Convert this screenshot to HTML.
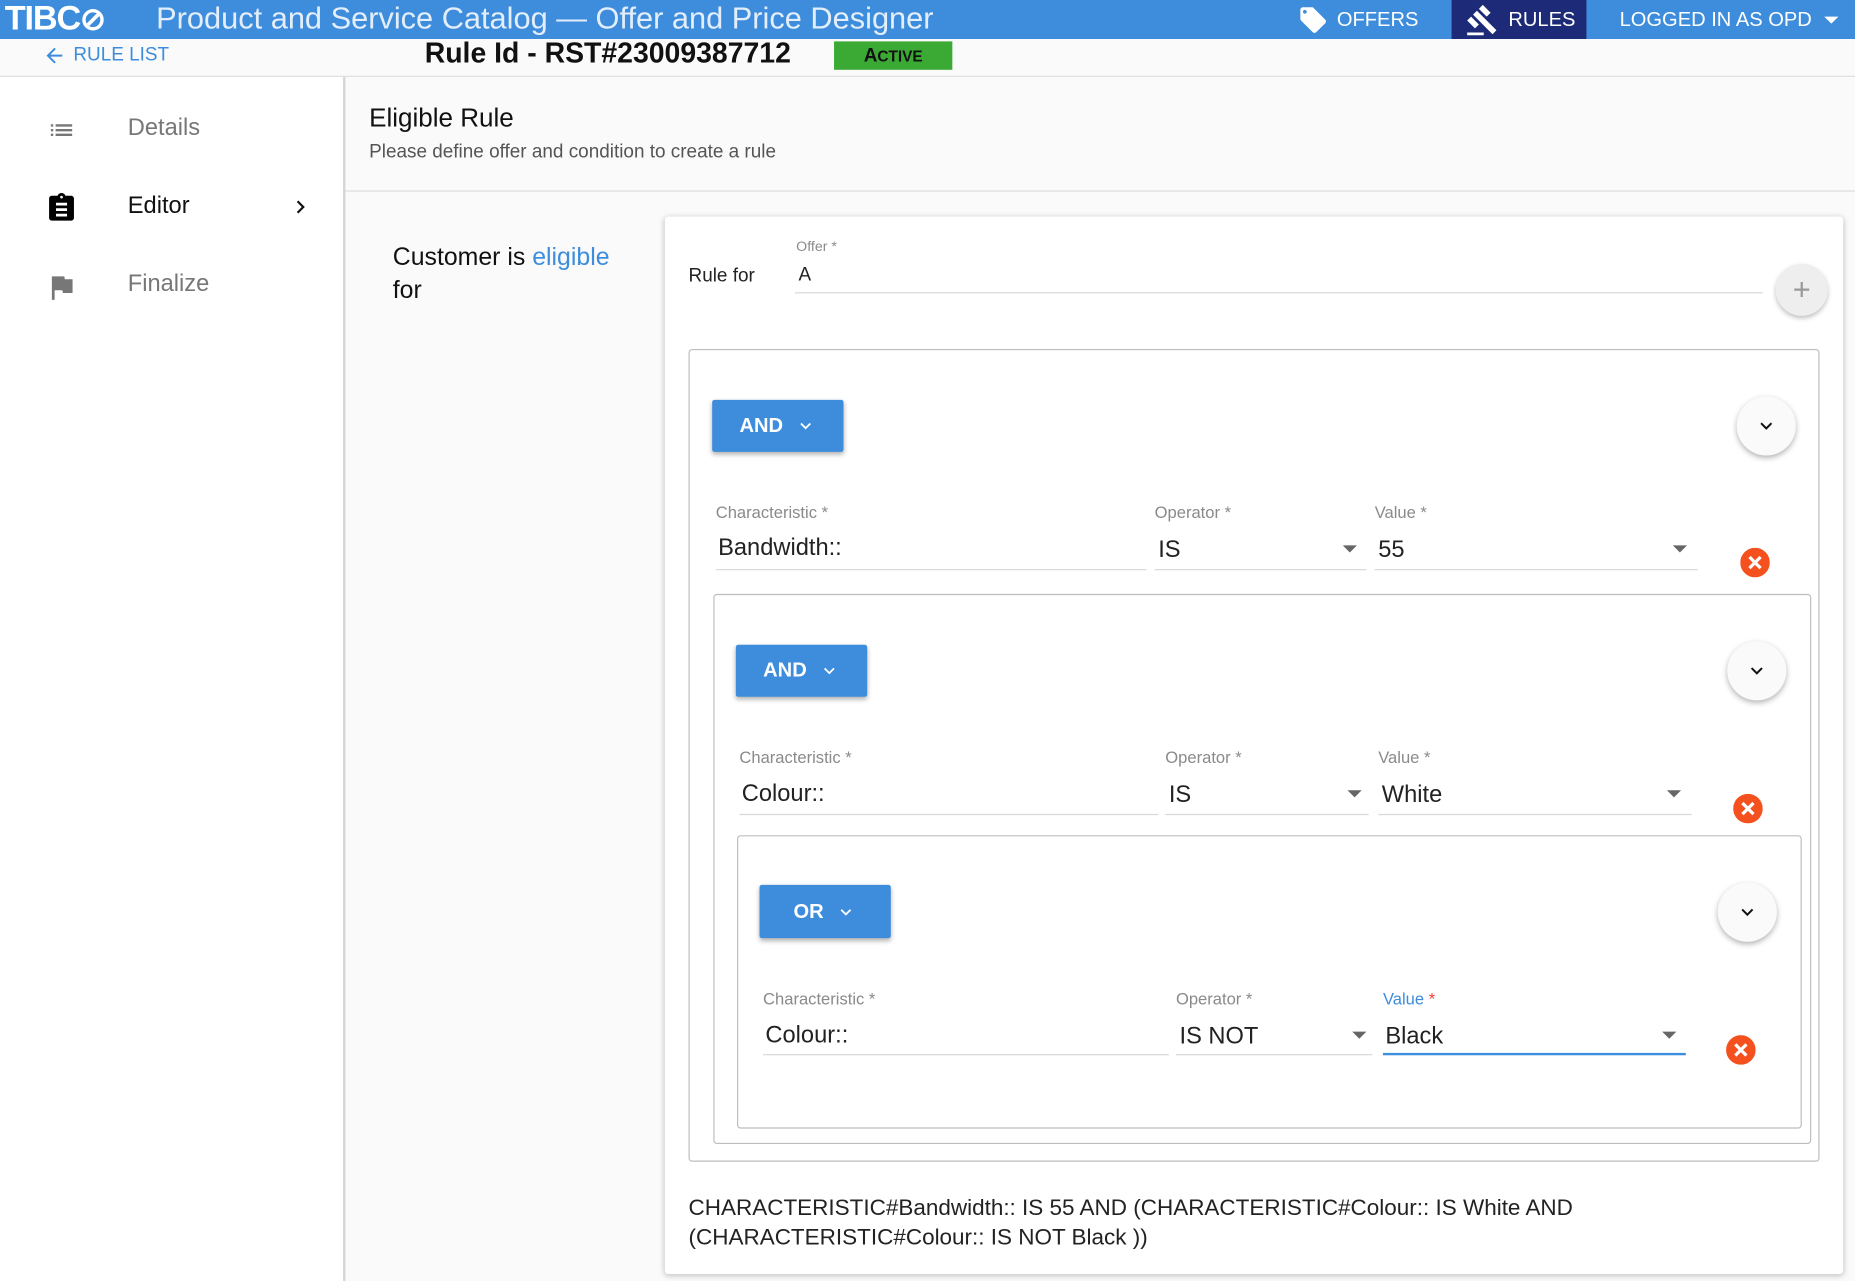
<!DOCTYPE html>
<html><head><meta charset="utf-8"><style>
html,body{margin:0;padding:0;width:1855px;height:1281px;overflow:hidden;background:#fafafa}
#r{position:absolute;left:0;top:0;width:1568px;height:1083px;transform:scale(1.18304);transform-origin:0 0;font-family:"Liberation Sans",sans-serif;background:#fafafa}
.a{position:absolute;white-space:nowrap}
.hdr{left:0;top:0;width:1568px;height:33px;background:#3d8ddc}
.lbl{font-size:14px;color:#8a8a8a}
.val{font-size:20px;color:#222}
.ul{position:absolute;height:1px;background:#d8d8d8}
.btn{position:absolute;background:#3d8ddc;color:#fff;font-size:17px;font-weight:bold;border-radius:2px;box-shadow:0 2px 4px rgba(0,0,0,.3);display:flex;align-items:center;justify-content:center;gap:10px}
.chev{position:absolute;width:50px;height:50px;border-radius:50%;background:#fafafa;box-shadow:0 2px 5px rgba(0,0,0,.3)}
.chev svg{position:absolute;left:15px;top:15px}
.xc{position:absolute;width:25px;height:25px}
.car{position:absolute;width:0;height:0;border-left:6px solid transparent;border-right:6px solid transparent;border-top:6px solid #666}
.box{position:absolute;border:1.5px solid #bdbdbd;border-radius:3px}
</style></head><body><div id="r">
<div class="a hdr"></div>
<div class="a" style="left:4px;top:0;font-size:29px;color:#fff;font-weight:bold;letter-spacing:-1px">TIBC<span style="font-size:26px">⊘</span></div>
<div class="a" style="left:132px;top:0;font-size:26px;color:#e3eefa">Product and Service Catalog — Offer and Price Designer</div>
<svg class="a" style="left:1096px;top:4px" width="28" height="26" viewBox="0 0 24 24"><path fill="#fff" d="M21.4 11.6l-9-9C12 2.2 11.5 2 11 2H4c-1.1 0-2 .9-2 2v7c0 .55.22 1.05.59 1.42l9 9c.36.36.86.58 1.41.58s1.05-.22 1.41-.59l7-7c.37-.36.59-.86.59-1.41s-.23-1.06-.6-1.4zM5.5 7C4.67 7 4 6.33 4 5.5S4.67 4 5.5 4 7 4.67 7 5.5 6.33 7 5.5 7z"/></svg>
<div class="a" style="left:1130px;top:7px;font-size:17px;color:#fff">OFFERS</div>
<div class="a" style="left:1227px;top:0;width:114px;height:33px;background:#1c2a78"></div>
<svg class="a" style="left:1239px;top:3px" width="28" height="28" viewBox="0 0 24 24"><path fill="#fff" d="M1 21h12v2H1zM5.24 8.07l2.83-2.83 14.14 14.14-2.83 2.83zM12.32 1l5.66 5.66-2.83 2.83-5.66-5.66zM3.83 9.48l5.66 5.66-2.83 2.83L1 12.31z"/></svg>
<div class="a" style="left:1275px;top:7px;font-size:17px;color:#fff">RULES</div>
<div class="a" style="left:1369px;top:7px;font-size:17px;color:#fff">LOGGED IN AS OPD</div>
<div class="car" style="left:1542px;top:14px;border-top-color:#fff"></div>
<div class="a" style="left:0;top:33px;width:1568px;height:31px;background:#fafafa;border-bottom:1px solid #ddd"></div>
<svg class="a" style="left:35px;top:37px" width="22" height="20" viewBox="0 0 24 24"><path fill="#3d8ddc" d="M20 11H7.83l5.59-5.59L12 4l-8 8 8 8 1.41-1.41L7.83 13H20v-2z"/></svg>
<div class="a" style="left:62px;top:38px;font-size:16px;color:#3d8ddc">RULE LIST</div>
<div class="a" style="left:359px;top:32px;font-size:24px;font-weight:bold;color:#111">Rule Id - RST#23009387712</div>
<div class="a" style="left:705px;top:35px;width:100px;height:24px;background:#3aaa35;color:#111;font-size:16px;font-weight:bold;text-align:center;line-height:26px">A<span style="font-size:13px">CTIVE</span></div>
<div class="a" style="left:0;top:65px;width:290px;height:1018px;background:#fff;border-right:2px solid #d5d5d5"></div>
<svg class="a" style="left:38px;top:98px" width="28" height="24" viewBox="0 0 24 24"><path fill="#777" d="M3 13h2v-2H3v2zm0 4h2v-2H3v2zm0-8h2V7H3v2zm4 4h14v-2H7v2zm0 4h14v-2H7v2zM7 7v2h14V7H7z"/></svg>
<div class="a" style="left:108px;top:97px;font-size:20px;color:#777">Details</div>
<svg class="a" style="left:38px;top:162px" width="28" height="28" viewBox="0 0 24 24"><path fill="#000" d="M19 3h-4.18C14.4 1.84 13.3 1 12 1s-2.4.84-2.82 2H5c-1.1 0-2 .9-2 2v14c0 1.1.9 2 2 2h14c1.1 0 2-.9 2-2V5c0-1.1-.9-2-2-2zm-7 0c.55 0 1 .45 1 1s-.45 1-1 1-1-.45-1-1 .45-1 1-1zm4 15H8v-2h8v2zm0-4H8v-2h8v2zm0-4H8V8h8v2z"/></svg>
<div class="a" style="left:108px;top:163px;font-size:20px;color:#111">Editor</div>
<svg class="a" style="left:243px;top:164px" width="22" height="22" viewBox="0 0 24 24"><path fill="#111" d="M8.59 16.59L13.17 12 8.59 7.41 10 6l6 6-6 6z"/></svg>
<svg class="a" style="left:38px;top:229px" width="28" height="28" viewBox="0 0 24 24"><path fill="#777" d="M14.4 6L14 4H5v17h2v-7h5.6l.4 2h7V6z"/></svg>
<div class="a" style="left:108px;top:229px;font-size:20px;color:#777">Finalize</div>
<div class="a" style="left:312px;top:87px;font-size:22px;color:#111">Eligible Rule</div>
<div class="a" style="left:312px;top:120px;font-size:16px;color:#555">Please define offer and condition to create a rule</div>
<div class="a" style="left:292px;top:161px;width:1276px;height:1px;background:#ddd"></div>
<div class="a" style="left:332px;top:204px;font-size:21px;color:#111;line-height:28px">Customer is <span style="color:#3d8ddc">eligible</span><br>for</div>
<div class="a" style="left:562px;top:183px;width:996px;height:894px;background:#fff;box-shadow:0 1px 5px rgba(0,0,0,.25);border-radius:3px"></div>
<div class="a" style="left:582px;top:225px;font-size:16px;color:#222">Rule for</div>
<div class="a lbl" style="left:673px;top:201px;font-size:12px">Offer *</div>
<div class="a" style="left:675px;top:224px;font-size:16px;color:#222">A</div>
<div class="ul" style="left:672px;top:247px;width:818px"></div>
<div class="a" style="left:1501px;top:223px;width:44px;height:44px;border-radius:50%;background:#eee;box-shadow:0 2px 4px rgba(0,0,0,.25);color:#999;font-size:26px;text-align:center;line-height:42px">+</div>

<div class="box" style="left:582px;top:295px;width:954px;height:685px"></div>
<div class="btn" style="left:602px;top:338px;width:111px;height:44px">AND <svg width="18" height="18" viewBox="0 0 24 24"><path fill="#fff" d="M7.41 8.59L12 13.17l4.59-4.58L18 10l-6 6-6-6z"/></svg></div>
<div class="chev" style="left:1468px;top:335px"><svg width="20" height="20" viewBox="0 0 24 24"><path fill="#111" d="M7.41 8.59L12 13.17l4.59-4.58L18 10l-6 6-6-6z"/></svg></div>
<div class="a lbl" style="left:605px;top:425px">Characteristic *</div>
<div class="a lbl" style="left:976px;top:425px">Operator *</div>
<div class="a lbl" style="left:1162px;top:425px">Value *</div>
<div class="a val" style="left:607px;top:452px">Bandwidth::</div>
<div class="a val" style="left:979px;top:454px">IS</div>
<div class="car" style="left:1135px;top:461px"></div>
<div class="a val" style="left:1165px;top:454px">55</div>
<div class="car" style="left:1414px;top:461px"></div>
<div class="ul" style="left:605px;top:481px;width:364px"></div>
<div class="ul" style="left:976px;top:481px;width:179px"></div>
<div class="ul" style="left:1162px;top:481px;width:273px"></div>
<svg class="xc" style="left:1471px;top:463px" viewBox="0 0 24 24"><circle cx="12" cy="12" r="12" fill="#f4511e"/><path d="M7.5 7.5l9 9M16.5 7.5l-9 9" stroke="#fff" stroke-width="2.6"/></svg>

<div class="box" style="left:603px;top:502px;width:926px;height:463px"></div>
<div class="btn" style="left:622px;top:545px;width:111px;height:44px">AND <svg width="18" height="18" viewBox="0 0 24 24"><path fill="#fff" d="M7.41 8.59L12 13.17l4.59-4.58L18 10l-6 6-6-6z"/></svg></div>
<div class="chev" style="left:1460px;top:542px"><svg width="20" height="20" viewBox="0 0 24 24"><path fill="#111" d="M7.41 8.59L12 13.17l4.59-4.58L18 10l-6 6-6-6z"/></svg></div>
<div class="a lbl" style="left:625px;top:632px">Characteristic *</div>
<div class="a lbl" style="left:985px;top:632px">Operator *</div>
<div class="a lbl" style="left:1165px;top:632px">Value *</div>
<div class="a val" style="left:627px;top:660px">Colour::</div>
<div class="a val" style="left:988px;top:661px">IS</div>
<div class="car" style="left:1139px;top:668px"></div>
<div class="a val" style="left:1168px;top:661px">White</div>
<div class="car" style="left:1409px;top:668px"></div>
<div class="ul" style="left:625px;top:688px;width:354px"></div>
<div class="ul" style="left:985px;top:688px;width:172px"></div>
<div class="ul" style="left:1165px;top:688px;width:265px"></div>
<svg class="xc" style="left:1465px;top:671px" viewBox="0 0 24 24"><circle cx="12" cy="12" r="12" fill="#f4511e"/><path d="M7.5 7.5l9 9M16.5 7.5l-9 9" stroke="#fff" stroke-width="2.6"/></svg>

<div class="box" style="left:623px;top:706px;width:898px;height:246px"></div>
<div class="btn" style="left:642px;top:748px;width:111px;height:45px">OR <svg width="18" height="18" viewBox="0 0 24 24"><path fill="#fff" d="M7.41 8.59L12 13.17l4.59-4.58L18 10l-6 6-6-6z"/></svg></div>
<div class="chev" style="left:1452px;top:746px"><svg width="20" height="20" viewBox="0 0 24 24"><path fill="#111" d="M7.41 8.59L12 13.17l4.59-4.58L18 10l-6 6-6-6z"/></svg></div>
<div class="a lbl" style="left:645px;top:836px">Characteristic *</div>
<div class="a lbl" style="left:994px;top:836px">Operator *</div>
<div class="a lbl" style="left:1169px;top:836px;color:#3d8ddc">Value <span style="color:#f44336">*</span></div>
<div class="a val" style="left:647px;top:864px">Colour::</div>
<div class="a val" style="left:997px;top:865px">IS NOT</div>
<div class="car" style="left:1143px;top:872px"></div>
<div class="a val" style="left:1171px;top:865px">Black</div>
<div class="car" style="left:1405px;top:872px"></div>
<div class="ul" style="left:645px;top:891px;width:343px"></div>
<div class="ul" style="left:994px;top:891px;width:166px"></div>
<div class="ul" style="left:1169px;top:890px;width:256px;height:2px;background:#3d8ddc"></div>
<svg class="xc" style="left:1459px;top:875px" viewBox="0 0 24 24"><circle cx="12" cy="12" r="12" fill="#f4511e"/><path d="M7.5 7.5l9 9M16.5 7.5l-9 9" stroke="#fff" stroke-width="2.6"/></svg>

<div class="a" style="left:582px;top:1009px;font-size:19px;color:#222;line-height:25px">CHARACTERISTIC#Bandwidth:: IS 55 AND (CHARACTERISTIC#Colour:: IS White AND<br>(CHARACTERISTIC#Colour:: IS NOT Black ))</div>
</div></body></html>
